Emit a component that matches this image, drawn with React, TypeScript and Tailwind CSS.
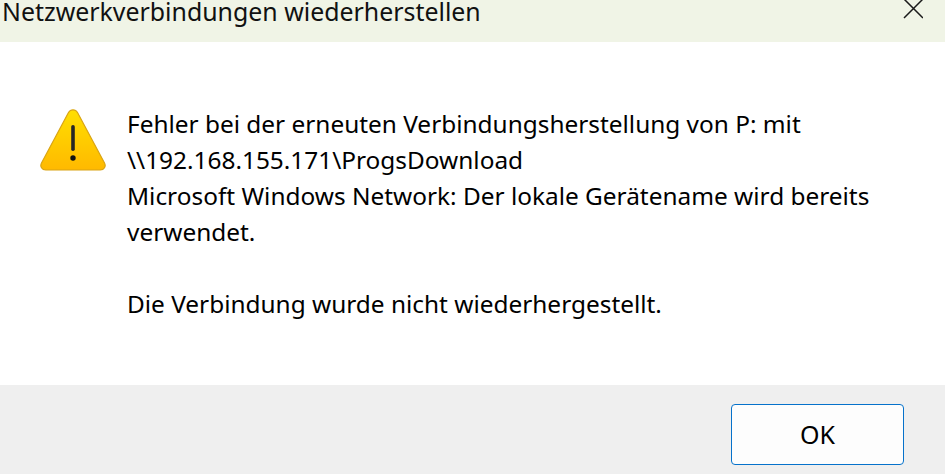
const font = { fontFamily: '"Noto Sans", "Open Sans", sans-serif' };

function WarningIcon() {
  return (
    <svg width="66" height="66" viewBox="0 0 66 66" className="mt-[1px] shrink-0">
      <defs>
        <linearGradient id="warn" x1="0" y1="0" x2="0" y2="1">
          <stop offset="0" stopColor="#ffdf00" />
          <stop offset="1" stopColor="#ffb900" />
        </linearGradient>
      </defs>
      <path
        d="M28.5 4.500c2-3.600 7-3.600 9 0l27 50.500c1.800 3.400-.4 7-4.300 7H5.800c-3.900 0-6.100-3.600-4.300-7z"
        fill="url(#warn)"
        stroke="#d9a414"
        strokeWidth="1.200"
      />
      <rect x="31.200" y="17" width="3.600" height="26" rx="1.800" fill="#262626" />
      <circle cx="33" cy="50" r="2.700" fill="#111" />
    </svg>
  );
}

export default function App() {
  return (
    <div className="flex h-[474px] w-[945px] flex-col overflow-hidden bg-white text-black" style={font}>
      <div className="flex h-[42px] shrink-0 items-start justify-between overflow-hidden bg-[#f0f4e6] pl-[2px] pr-[22px]">
        <span className="text-[24.9px] leading-[22px] text-[#111]">Netzwerkverbindungen wiederherstellen</span>
        <svg width="20" height="20" viewBox="0 0 20 20" className="-mt-[1px]">
          <path d="M1 0l19 19M20 0L1 19" stroke="#1a1a1a" strokeWidth="1.500" fill="none" />
        </svg>
      </div>
      <div className="flex flex-1 items-start gap-[21px] pl-[40px] pr-[60px] pt-[65px]">
        <WarningIcon />
        <div className="-mt-[1px] text-[24.4px] leading-[36px]">
          <p>Fehler bei der erneuten Verbindungsherstellung von P: mit</p>
          <p>\\192.168.155.171\ProgsDownload</p>
          <p>Microsoft Windows Network: Der lokale Gerätename wird bereits</p>
          <p>verwendet.</p>
          <p className="mt-[36px]">Die Verbindung wurde nicht wiederhergestellt.</p>
        </div>
      </div>
      <div className="flex h-[89px] shrink-0 items-start justify-end bg-[#efefef] pr-[41px] pt-[19px]">
        <button className="h-[61px] w-[173px] rounded-[4px] border-[1.5px] border-[#0672cb] bg-[#fdfdfd] text-[25px] text-black">
          OK
        </button>
      </div>
    </div>
  );
}
